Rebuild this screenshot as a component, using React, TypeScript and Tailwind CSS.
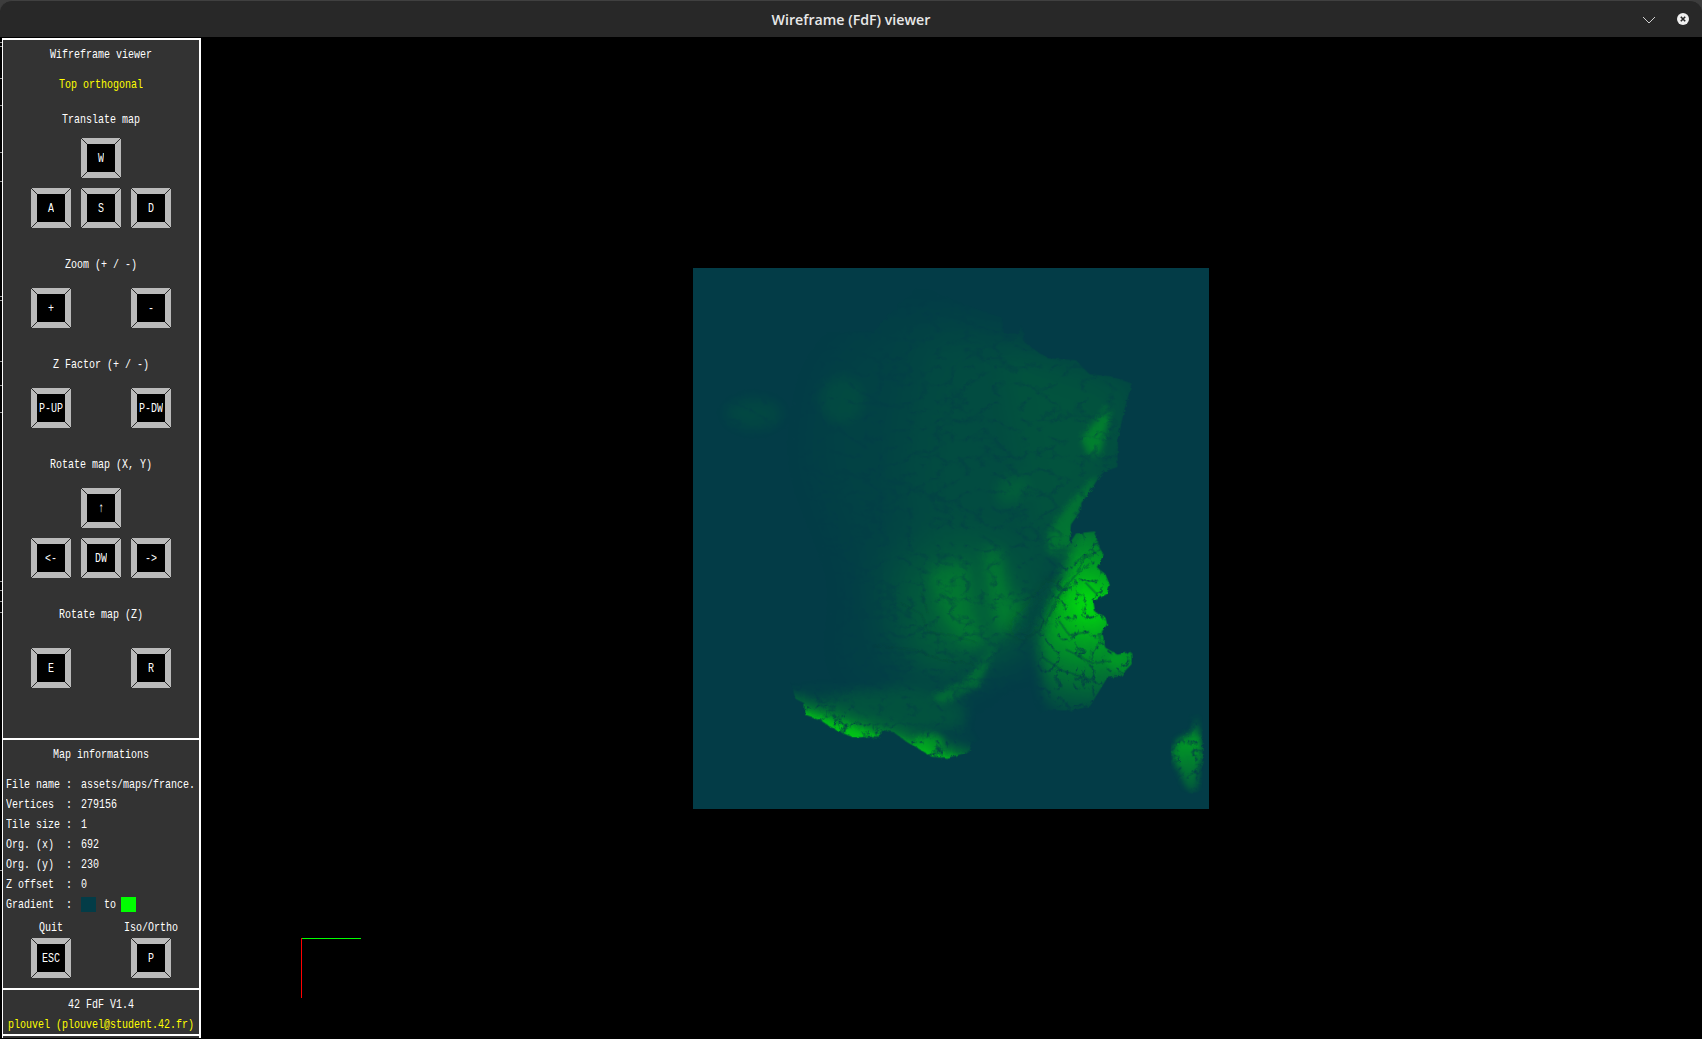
import React from "react";

const FONT = "font-['Liberation_Mono',monospace] text-[10px]";

// mlx draws the X11 6x13 font: narrow and tall
function T({ children }: { children: React.ReactNode }) {
  return <span className="inline-block scale-y-[1.36] whitespace-pre">{children}</span>;
}

// Bevelled keyboard key, same look as the mlx panel
function Key({ label }: { label: string }) {
  return (
    <div className="relative flex h-10 w-10 items-center justify-center border-[6px] border-[#bababa] bg-black text-white">
      <T>{label}</T>
      <svg className="absolute -left-[6px] -top-[6px]" width="40" height="40" viewBox="0 0 40 40" shapeRendering="crispEdges">
        <path d="M0 0L6 6M40 0L34 6M0 40L6 34M40 40L34 34" stroke="#2c2c2c" strokeWidth="1" fill="none" />
      </svg>
    </div>
  );
}

function Label({ children, className = "text-white" }: { children: React.ReactNode; className?: string }) {
  return (
    <div className={`flex h-5 items-center justify-center ${className}`}>
      <T>{children}</T>
    </div>
  );
}

function KeyPair({ left, right, className = "" }: { left: string; right: string; className?: string }) {
  return (
    <div className={`flex justify-center gap-[60px] ${className}`}>
      <Key label={left} />
      <Key label={right} />
    </div>
  );
}

function KeyCross({ top, left, mid, right, className = "" }: { top: string; left: string; mid: string; right: string; className?: string }) {
  return (
    <div className={`flex flex-col items-center gap-[10px] ${className}`}>
      <Key label={top} />
      <div className="flex gap-[10px]">
        <Key label={left} />
        <Key label={mid} />
        <Key label={right} />
      </div>
    </div>
  );
}

function InfoRow({ name, children }: { name: string; children: React.ReactNode }) {
  return (
    <div className="flex h-5 items-center whitespace-pre pl-[3px] text-white">
      <span className="w-[60px]"><T>{name}</T></span>
      <span className="w-[15px]"><T>:</T></span>
      {children}
    </div>
  );
}

const LAND =
  "700,60 760,95 900,150 935,160 940,205 985,205 995,180 1000,230 1050,265 1070,275 1150,280 1190,320 1250,325 1312,345 1290,420 1272,500 1270,580 1232,592 1215,610 1190,650 1165,680 1165,700 1135,740 1130,795 1150,765 1205,760 1215,800 1230,825 1210,860 1235,880 1248,910 1240,935 1200,955 1205,985 1235,1000 1240,1020 1225,1040 1235,1085 1270,1105 1310,1097 1312,1130 1280,1165 1240,1170 1190,1250 1135,1262 1060,1260 1010,1320 900,1340 850,1350 840,1378 770,1395 730,1390 700,1372 660,1350 620,1322 582,1315 580,1338 500,1335 450,1315 410,1290 365,1275 360,1240 335,1228 300,1100 200,700 60,470 60,380 210,300 370,200 560,200";

const G = "#00ff00";

// Height map of the loaded file: green at an alpha that follows the height, over the low colour
function FranceMap() {
  return (
    <svg className="absolute left-[492px] top-[230px]" width="516" height="541" viewBox="38 22 1498 1515" preserveAspectRatio="none">
      <defs>
        <filter id="b70" x="-50%" y="-50%" width="200%" height="200%"><feGaussianBlur stdDeviation="70" /></filter>
        <filter id="b40" x="-40%" y="-40%" width="180%" height="180%"><feGaussianBlur stdDeviation="40" /></filter>
        <filter id="b20" x="-40%" y="-40%" width="180%" height="180%"><feGaussianBlur stdDeviation="20" /></filter>
        <filter id="b10" x="-40%" y="-40%" width="180%" height="180%"><feGaussianBlur stdDeviation="10" /></filter>
        <filter id="rough" filterUnits="userSpaceOnUse" x="38" y="22" width="1498" height="1515">
          <feTurbulence type="fractalNoise" baseFrequency="0.07" numOctaves="3" seed="4" result="n" />
          <feDisplacementMap in="SourceGraphic" in2="n" scale="10" />
        </filter>
        <filter id="soft" filterUnits="userSpaceOnUse" x="38" y="22" width="1498" height="1515" colorInterpolationFilters="sRGB">
          <feTurbulence type="turbulence" baseFrequency="0.012 0.02" numOctaves="5" seed="9" result="n" />
          <feColorMatrix in="n" type="matrix" values="0 0 0 0 1  0 0 0 0 1  0 0 0 0 1  2.2 0 0 0 0.42" result="a" />
          <feComposite in="SourceGraphic" in2="a" operator="in" />
        </filter>
        <filter id="ridge" filterUnits="userSpaceOnUse" x="38" y="22" width="1498" height="1515" colorInterpolationFilters="sRGB">
          <feTurbulence type="turbulence" baseFrequency="0.02" numOctaves="5" seed="12" result="n" />
          <feColorMatrix in="n" type="matrix" values="0 0 0 0 1  0 0 0 0 1  0 0 0 0 1  4.6 0 0 0 -0.08" result="a" />
          <feComposite in="SourceGraphic" in2="a" operator="in" />
        </filter>
        <radialGradient id="alpsG" gradientUnits="userSpaceOnUse" cx="1185" cy="965" r="300">
          <stop offset="0" stopColor={G} stopOpacity="0.88" />
          <stop offset="0.3" stopColor={G} stopOpacity="0.55" />
          <stop offset="0.65" stopColor={G} stopOpacity="0.3" />
          <stop offset="1" stopColor={G} stopOpacity="0.08" />
        </radialGradient>
        <linearGradient id="pyrG" gradientUnits="userSpaceOnUse" x1="620" y1="1190" x2="575" y2="1340">
          <stop offset="0" stopColor={G} stopOpacity="0" />
          <stop offset="0.6" stopColor={G} stopOpacity="0.03" />
          <stop offset="0.82" stopColor={G} stopOpacity="0.24" />
          <stop offset="1" stopColor={G} stopOpacity="0.7" />
        </linearGradient>
        <linearGradient id="corG" x1="0" y1="0" x2="0" y2="1">
          <stop offset="0" stopColor={G} stopOpacity="0.1" />
          <stop offset="0.35" stopColor={G} stopOpacity="0.48" />
          <stop offset="1" stopColor={G} stopOpacity="0.15" />
        </linearGradient>
        <clipPath id="land"><polygon points={LAND} /></clipPath>
      </defs>
      <rect x="38" y="22" width="1498" height="1515" fill="#033c47" />
      <g filter="url(#rough)">
        <g clipPath="url(#land)">
          <g filter="url(#soft)">
            <polygon points="620,140 900,190 1350,330 1300,600 1150,760 1120,1000 1000,1120 880,1110 720,1170 480,1170 520,900 380,560 420,300" fill={G} opacity="0.03" filter="url(#b70)" />
            <polygon points="740,180 1000,220 1350,330 1300,600 1150,760 1120,1000 1000,1120 880,1110 720,1170 660,1120 700,860 640,620 680,360" fill={G} opacity="0.05" filter="url(#b70)" />
            <polygon points="920,230 1350,330 1300,600 1150,780 1060,850 1000,640" fill={G} opacity="0.04" filter="url(#b40)" />
            <ellipse cx="215" cy="430" rx="85" ry="45" fill={G} opacity="0.06" filter="url(#b20)" />
            <ellipse cx="470" cy="390" rx="70" ry="70" fill={G} opacity="0.05" filter="url(#b20)" />
            <polygon points="650,1320 830,1310 830,1240 660,1190 480,1210 380,1240" fill={G} opacity="0.1" filter="url(#b20)" />
            <polygon points="600,850 880,790 1000,900 990,1010 900,1090 860,1150 730,1190 660,1080" fill={G} opacity="0.12" filter="url(#b70)" />
            <polygon points="720,870 830,840 850,1000 900,1070 830,1090 760,1000" fill={G} opacity="0.14" filter="url(#b20)" />
            <polygon points="885,810 925,805 960,960 1000,930 990,1010 920,1060" fill={G} opacity="0.2" filter="url(#b20)" />
            <polygon points="830,1170 880,1120 920,1060 870,1190 760,1240 730,1225" fill={G} opacity="0.2" filter="url(#b10)" />
            <polygon points="1165,500 1240,410 1250,430 1220,540 1185,545" fill={G} opacity="0.26" filter="url(#b10)" />
            <polygon points="1070,760 1130,680 1200,610 1215,610 1165,700 1130,790 1090,830 1065,810" fill={G} opacity="0.2" filter="url(#b10)" />
            <polygon points="920,620 1000,600 1020,640 950,690 925,680" fill={G} opacity="0.1" filter="url(#b20)" />
          </g>
          <path d="M975 1040L1020 1000L1070 950L1090 910" stroke="#033c47" strokeWidth="40" fill="none" opacity="0.4" filter="url(#b20)" />
          <path d="M640 960L700 990L720 1040L790 1050L860 1070M560 1080L680 1090L760 1120L850 1130M700 930L720 990" stroke="#033c47" strokeWidth="4" fill="none" opacity="0.2" />
          <g filter="url(#ridge)">
            <polygon points="1135,1300 1060,1240 1045,1100 1050,1040 1080,960 1120,880 1130,800 1150,740 1350,740 1350,1200 1240,1240" fill="url(#alpsG)" filter="url(#b20)" />
            <polygon points="860,1420 300,1420 300,1200 420,1180 600,1190 760,1220 830,1280 860,1340" fill="url(#pyrG)" filter="url(#b10)" />
            <ellipse cx="725" cy="1348" rx="42" ry="22" fill={G} opacity="0.3" filter="url(#b10)" />
            <ellipse cx="1290" cy="1125" rx="50" ry="30" fill={G} opacity="0.2" filter="url(#b10)" />
          </g>
        </g>
        <g filter="url(#ridge)">
          <polygon points="1500,1270 1508,1330 1517,1370 1505,1440 1500,1490 1470,1480 1450,1430 1425,1385 1445,1345 1490,1325" fill="url(#corG)" filter="url(#b10)" />
        </g>
        <path d="M1060 1020L1100 940L1150 880L1190 850M1100 1010L1130 1050L1190 1040M1150 880L1180 820M1180 905L1215 940M1120 1090L1200 1130L1250 1120M1050 1110L1110 1150L1180 1170" stroke="#033c47" strokeWidth="6" fill="none" opacity="0.4" />
      </g>
    </svg>
  );
}

const TICKS = [42, 46, 78, 105, 152, 181, 296, 300, 361, 385, 412, 581, 590, 601, 612, 870];

export default function App() {
  return (
    <div className="relative flex h-screen w-full flex-col overflow-hidden bg-[#3d3d3d]">
      {/* window title bar */}
      <div className="relative flex h-[37px] shrink-0 items-center justify-center rounded-t-[12px] border-t border-[#404040] bg-[#282828] pt-px">
        <span className="font-['Open_Sans',sans-serif] text-[14.2px] font-semibold text-[#e8e8e8]">Wireframe (FdF) viewer</span>
        <svg className="absolute left-[1642px] top-[12px]" width="14" height="14" viewBox="0 0 14 14">
          <path d="M1 4L7 10L13 4" stroke="#cfcfcf" strokeWidth="1" fill="none" />
        </svg>
        <svg className="absolute left-[1677px] top-[12px]" width="12" height="12" viewBox="0 0 12 12">
          <circle cx="6" cy="6" r="6" fill="#f0f0f0" />
          <path d="M3.8 3.8L8.2 8.2M8.2 3.8L3.8 8.2" stroke="#282828" strokeWidth="1.6" />
        </svg>
      </div>

      <div className={`relative flex min-h-0 flex-1 bg-black pt-px ${FONT}`}>
        {TICKS.map((y) => (
          <div key={y} className="absolute left-0 h-px w-[2px] bg-[#9a9a9a]" style={{ top: y - 37 }} />
        ))}

        {/* side panel */}
        <div className="ml-[2px] flex h-[1000px] w-[199px] shrink-0 flex-col border-l border-r-2 border-t-2 border-white bg-[#333333]">
          <div className="flex h-[698px] shrink-0 flex-col">
            <Label className="mt-1 text-white">Wifreframe viewer</Label>
            <Label className="mt-[10px] text-[#ffff00]">Top orthogonal</Label>
            <Label className="mt-[15px] text-white">Translate map</Label>
            <KeyCross className="mt-[9px]" top="W" left="A" mid="S" right="D" />
            <Label className="mt-[26px] text-white">Zoom (+ / -)</Label>
            <KeyPair className="mt-[14px]" left="+" right="-" />
            <Label className="mt-[26px] text-white">Z Factor (+ / -)</Label>
            <KeyPair className="mt-[14px]" left="P-UP" right="P-DW" />
            <Label className="mt-[26px] text-white">Rotate map (X, Y)</Label>
            <KeyCross className="mt-[14px]" top="↑" left="<-" mid="DW" right="->" />
            <Label className="mt-[26px] text-white">Rotate map (Z)</Label>
            <KeyPair className="mt-[24px]" left="E" right="R" />
          </div>

          <div className="flex h-[250px] shrink-0 flex-col border-t-2 border-white">
            <Label className="mt-1 text-white">Map informations</Label>
            <div className="mt-[10px]">
              <InfoRow name="File name"><T>assets/maps/france.</T></InfoRow>
              <InfoRow name="Vertices"><T>279156</T></InfoRow>
              <InfoRow name="Tile size"><T>1</T></InfoRow>
              <InfoRow name="Org. (x)"><T>692</T></InfoRow>
              <InfoRow name="Org. (y)"><T>230</T></InfoRow>
              <InfoRow name="Z offset"><T>0</T></InfoRow>
              <InfoRow name="Gradient">
                <span className="h-[15px] w-[15px] bg-[#033c47]" />
                <span className="ml-[8px] w-[17px]"><T>to</T></span>
                <span className="h-[15px] w-[15px] bg-[#00ff00]" />
              </InfoRow>
            </div>
            <div className="mt-[6px] flex justify-center gap-[60px]">
              <div className="flex w-10 flex-col items-center">
                <div className="flex h-[14px] items-center whitespace-pre text-white"><T>Quit</T></div>
                <div className="mt-[4px]"><Key label="ESC" /></div>
              </div>
              <div className="flex w-10 flex-col items-center">
                <div className="flex h-[14px] items-center whitespace-pre text-white"><T>Iso/Ortho</T></div>
                <div className="mt-[4px]"><Key label="P" /></div>
              </div>
            </div>
          </div>

          <div className="flex h-[48px] shrink-0 flex-col border-y-2 border-white pt-[4px]">
            <Label className="text-white">42 FdF V1.4</Label>
            <Label className="text-[#ffff00]">plouvel (plouvel@student.42.fr)</Label>
          </div>
        </div>

        {/* viewport */}
        <div className="relative flex-1">
          <FranceMap />
          <div className="absolute left-[100px] top-[900px] h-px w-[60px] bg-[#00ff00]" />
          <div className="absolute left-[100px] top-[900px] h-[60px] w-px bg-[#ff0000]" />
        </div>
      </div>
    </div>
  );
}
